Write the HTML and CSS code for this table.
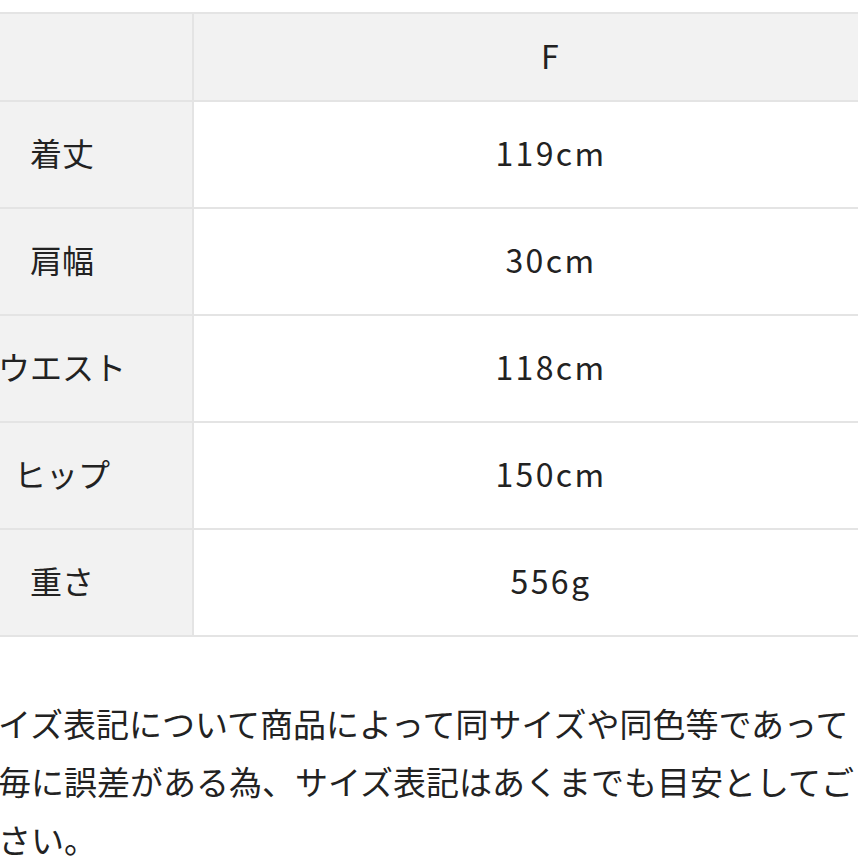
FILE: index.html
```html
<!DOCTYPE html>
<html lang="ja">
<head>
<meta charset="utf-8">
<link rel="stylesheet" href="styles.css">
</head>
<body>
<div class="page">
  <div class="size-table">
    <div class="row head">
      <div class="cell label"></div>
      <div class="cell value">F</div>
    </div>
    <div class="row">
      <div class="cell label">着丈</div>
      <div class="cell value">119cm</div>
    </div>
    <div class="row">
      <div class="cell label">肩幅</div>
      <div class="cell value">30cm</div>
    </div>
    <div class="row">
      <div class="cell label">ウエスト</div>
      <div class="cell value">118cm</div>
    </div>
    <div class="row">
      <div class="cell label">ヒップ</div>
      <div class="cell value">150cm</div>
    </div>
    <div class="row">
      <div class="cell label">重さ</div>
      <div class="cell value">556g</div>
    </div>
  </div>
  <div class="note">
    <div class="line">イズ表記について商品によって同サイズや同色等であって</div>
    <div class="line">毎に誤差がある為、サイズ表記はあくまでも目安としてご</div>
    <div class="line last">さい。</div>
  </div>
</div>
</body>
</html>
```

FILE: styles.css
```css
html, body {
  margin: 0;
  padding: 0;
  overflow: hidden;
  background: #ffffff;
}
body {
  width: 858px;
  height: 858px;
  font-family: "Noto Sans CJK JP", "Noto Sans", sans-serif;
  color: #222222;
}
.page {
  margin-left: -68px;
  padding-top: 12px;
}
.size-table {
  width: 974px;
  display: flex;
  flex-direction: column;
  border-top: 2px solid #e4e4e4;
}
.row {
  display: flex;
  height: 105px;
  border-bottom: 2px solid #e4e4e4;
}
.row.head {
  height: 86px;
}
.cell {
  display: flex;
  align-items: center;
  justify-content: center;
  font-size: 32px;
  line-height: 1;
  padding-bottom: 5px;
  box-sizing: border-box;
}
.cell.label {
  width: 262px;
  background: #f2f2f2;
  border-right: 2px solid #e4e4e4;
}
.cell.value {
  flex: 1;
  background: #ffffff;
  font-size: 32px;
  letter-spacing: 2.4px;
  padding-left: 2px;
}
.row.head .cell.value {
  background: #f2f2f2;
}
.note {
  margin-top: 57px;
  margin-left: 66px;
  width: 856px;
  font-size: 33px;
  line-height: 58px;
  white-space: nowrap;
}
.line {
  height: 58px;
}
.line.last {
  height: 40px;
  line-height: 40px;
  padding-top: 9px;
}
```
